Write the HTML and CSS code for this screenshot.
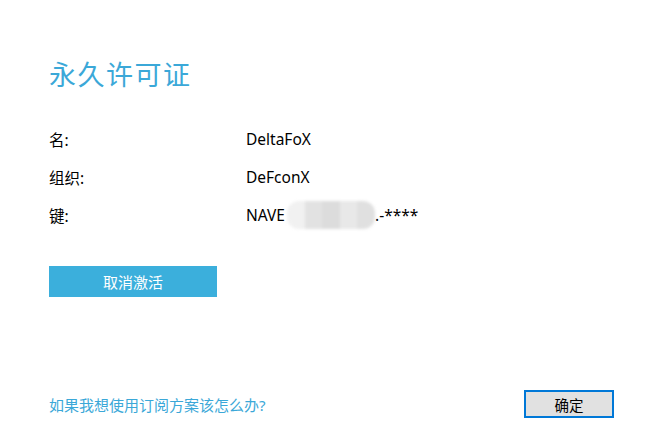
FILE: index.html
```html
<!DOCTYPE html>
<html lang="zh">
<head>
<meta charset="utf-8">
<link rel="stylesheet" href="styles.css">
</head>
<body>
<div class="page">
  <h1 class="title">永久许可证</h1>
  <div class="rows">
    <div class="row"><span class="label">名:</span><span class="value">DeltaFoX</span></div>
    <div class="row"><span class="label">组织:</span><span class="value">DeFconX</span></div>
    <div class="row"><span class="label">键:</span><span class="value">NAVE<span class="blur"><i class="b1"></i><i class="b2"></i><i class="b3"></i><i class="b4"></i><i class="b5"></i></span>.-****</span></div>
  </div>
  <button class="deact">取消激活</button>
  <div class="spacer"></div>
  <div class="footer">
    <a class="link">如果我想使用订阅方案该怎么办?</a>
    <button class="ok">确定</button>
  </div>
</div>
</body>
</html>
```

FILE: styles.css
```css
html, body { margin: 0; padding: 0; background: #fff; }
body {
  font-family: "Noto Sans", "Noto Sans CJK SC", sans-serif;
  color: #000;
  width: 664px;
  height: 443px;
  overflow: hidden;
}
.page {
  box-sizing: border-box;
  height: 443px;
  padding: 58px 50px 25px 49px;
  display: flex;
  flex-direction: column;
}
.title {
  margin: 0;
  font-weight: normal;
  font-size: 27px;
  line-height: 34px;
  color: #3ba8d8;
  letter-spacing: 1.5px;
}
.rows {
  margin-top: 28px;
  display: flex;
  flex-direction: column;
}
.row {
  display: flex;
  height: 38px;
  align-items: center;
  font-size: 15.5px;
}
.label { width: 197px; }
.value { display: inline-flex; align-items: center; }
.blur {
  display: inline-flex;
  height: 28px;
  width: 88px;
  margin-left: 2px;
  filter: blur(1.5px);
}
.blur i { flex: 1; display: block; background: #e6e6e6; }
.blur .b1 { background: #f1f1f1; border-radius: 12px 0 0 12px; }
.blur .b2 { background: #e2e2e2; }
.blur .b3 { background: #dcdcdc; }
.blur .b4 { background: #e8e8e8; }
.blur .b5 { background: #e0e0e0; border-radius: 0 12px 12px 0; }
.deact {
  margin-top: 32px;
  width: 168px;
  height: 31px;
  border: none;
  background: #3bafdc;
  color: #fff;
  font-family: inherit;
  font-size: 15px;
  padding: 0;
  align-self: flex-start;
}
.spacer { flex: 1; }
.footer {
  display: flex;
  justify-content: space-between;
  align-items: center;
}
.link {
  color: #3ba8d8;
  font-size: 15px;
}
.ok {
  width: 90px;
  height: 28px;
  box-sizing: border-box;
  background: #e1e1e1;
  border: 2px solid #0078d7;
  font-family: inherit;
  font-size: 14.5px;
  color: #000;
  padding: 0;
}
```
